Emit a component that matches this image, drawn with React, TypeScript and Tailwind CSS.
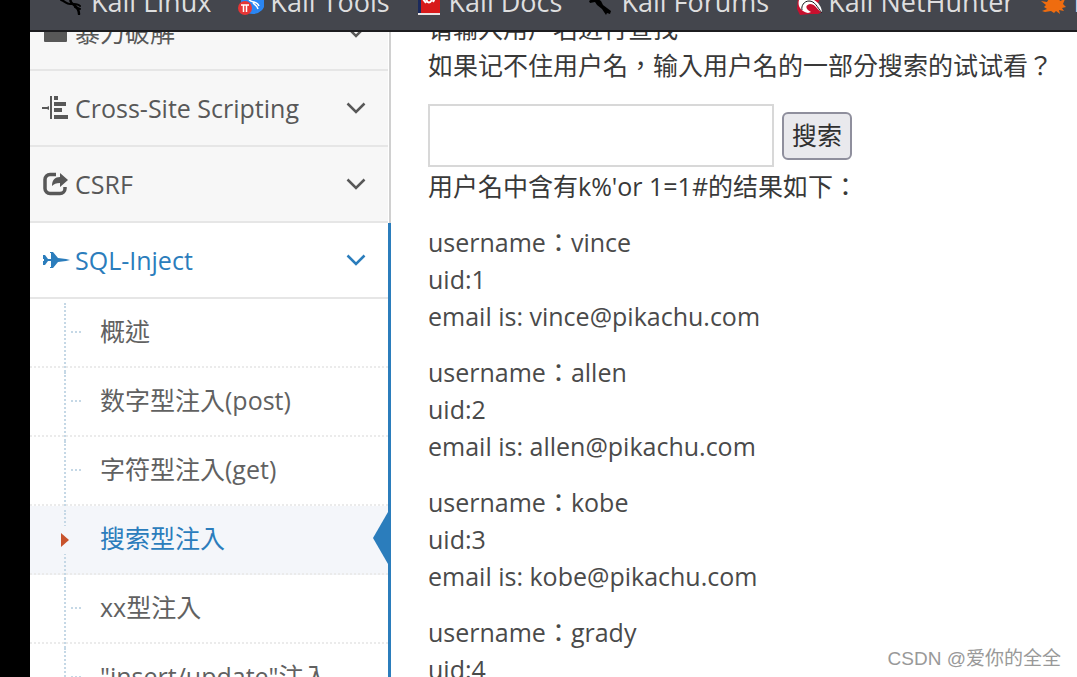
import { useState } from 'react';
import type { ReactNode } from 'react';

const bookmarks = [
  { label: 'Kali Linux', icon: <KaliDragon /> },
  { label: 'Kali Tools', icon: <KaliTools /> },
  { label: 'Kali Docs', icon: <KaliDocs /> },
  { label: 'Kali Forums', icon: <KaliForums /> },
  { label: 'Kali NetHunter', icon: <NetHunter /> },
  { label: 'Exploit-DB', icon: <ExploitDb /> },
];

const subItems = ['概述', '数字型注入(post)', '字符型注入(get)', '搜索型注入', 'xx型注入', '"insert/update"注入'];

const users = [
  { name: 'vince', uid: 1 },
  { name: 'allen', uid: 2 },
  { name: 'kobe', uid: 3 },
  { name: 'grady', uid: 4 },
];

function KaliDragon() {
  return (
    <svg viewBox="0 0 26 26" className="size-6.5" fill="none" stroke="#000" strokeLinecap="round">
      <path d="M2 11c4 1 5 4 9 4 4 0 8-1 10 2" strokeWidth="2" />
      <path d="M12 9c-3 7 8 6 8 16" strokeWidth="2.5" />
      <path d="M16 18l5 2" strokeWidth="2" />
    </svg>
  );
}

function KaliTools() {
  return (
    <svg viewBox="0 0 26 26" className="size-6.5">
      <circle cx="15" cy="13" r="12" fill="#2a86f3" />
      <path d="M11 11c4 3 8 1 10 6m-6-4c0 3 4 2 5 7" fill="none" stroke="#fff" strokeWidth="1.5" />
      <circle cx="7" cy="19" r="7" fill="#e63535" />
      <path d="M3 16h8M5.500 16v7M8.500 16v7" fill="none" stroke="#fff" strokeWidth="1.5" />
    </svg>
  );
}

function KaliDocs() {
  return (
    <svg viewBox="0 0 26 26" className="size-6.5">
      <path d="M1 0h22v26H1z" fill="#d81a1a" />
      <path d="M1 0h3v24H1z" fill="#1b2a5c" />
      <path d="M1 24h22v2H1z" fill="#e8e4e4" />
      <path d="M6 10l3 4m0-4c2 5 4 4 6 1m1 2 2-4" fill="none" stroke="#fff" strokeWidth="2" />
    </svg>
  );
}

function KaliForums() {
  return (
    <svg viewBox="0 0 26 26" className="size-6.5">
      <path d="M0 12l6-4 6 4 2 4 8 6-1 3-3-1-1 2-4-6-5-4-2-3-5 1z" fill="#000" />
    </svg>
  );
}

function NetHunter() {
  return (
    <svg viewBox="0 0 26 26" className="size-6.5">
      <path d="M2 8h23l-4 8 5 7-4 2h-8l-10 1-3-6z" fill="#c8102e" />
      <path d="M3 11c-2 7 3 12 9 13l3-1c-6-3-6-7-1-8 5 0 7 5 12 9 0-7-5-12-10-14z" fill="#fff" />
      <path d="M6 21c-1-4 2-9 7-9 6 0 8 6 13 12" fill="none" stroke="#16161a" strokeWidth="1" />
    </svg>
  );
}

function ExploitDb() {
  return (
    <svg viewBox="0 0 26 26" className="size-6.5">
      <path
        d="M0 12l6 1 3-5 8-1 2 5 5-2-2 5 3 3-4 1 2 3-5-1 1 4-4-3-2 2-3-2-6 1-3-1 5-2-3-2 2-2z"
        fill="#ef6c0f"
      />
    </svg>
  );
}

function ChevronDown() {
  return (
    <svg viewBox="0 0 20 12" className="h-3 w-5" fill="none" stroke="currentColor" strokeWidth="2.5">
      <path d="M1.500 1.500 10 10l8.500-8.500" />
    </svg>
  );
}

function FolderIcon() {
  return (
    <svg viewBox="0 0 28 24" className="h-6 w-7" fill="currentColor">
      <path d="M3 3h21a1 1 0 0 1 1 1v17a1 1 0 0 1-1 1H3a1 1 0 0 1-1-1V4a1 1 0 0 1 1-1z" />
    </svg>
  );
}

function BarsIcon() {
  return (
    <svg viewBox="0 0 28 24" className="h-6 w-7" fill="currentColor">
      <path d="M0 11h5l2-1v4l-2-1H0zM8 0h2v23H8zM12 0h4v4h-4zM12 6h12v4H12zM12 12h8v4h-8zM12 19h14v4H12z" />
    </svg>
  );
}

function ShareIcon() {
  return (
    <svg viewBox="0 0 28 24" className="h-6 w-7">
      <path
        d="M14 2.500H8a5 5 0 0 0-5 5v9a5 5 0 0 0 5 5h10a5 5 0 0 0 5-5V15"
        fill="none"
        stroke="currentColor"
        strokeWidth="3.5"
      />
      <path d="M18 1l8 7-8 7v-4c-4 0-6 1-8 3 0-6 3-9 8-9z" fill="currentColor" />
    </svg>
  );
}

function JetIcon() {
  return (
    <svg viewBox="0 0 28 24" className="h-6 w-7" fill="currentColor">
      <path d="M1 7h2l3 4h3V5H8V4h3l5 6 8 1 4 1-4 1-8 1-5 6H8v-1h1v-6H6l-3 4H1v-4h1v-2H1z" />
    </svg>
  );
}

interface MenuRowProps {
  icon: ReactNode;
  label: string;
  active?: boolean;
  onClick?: () => void;
}

function MenuRow({ icon, label, active, onClick }: MenuRowProps) {
  return (
    <button
      type="button"
      onClick={onClick}
      className={`flex h-[76px] w-full items-center gap-[5px] border-b-2 border-[#e6e6e6] pr-[22px] pl-3 text-left ${
        active ? 'bg-white text-[#2b7dbc]' : 'bg-[#f7f7f7] text-[#585858]'
      }`}
    >
      {icon}
      <span className="flex-1">{label}</span>
      <ChevronDown />
    </button>
  );
}

function Sidebar() {
  const [open, setOpen] = useState(true);
  const [current, setCurrent] = useState('搜索型注入');

  return (
    <nav className="-mt-[37px] flex w-[361px] shrink-0 flex-col">
      <div className="border-r-2 border-[#d0d0d0] pr-px">
        <MenuRow icon={<FolderIcon />} label="暴力破解" />
        <MenuRow icon={<BarsIcon />} label="Cross-Site Scripting" />
        <MenuRow icon={<ShareIcon />} label="CSRF" />
      </div>
      <div className="grow border-r-3 border-[#2b7dbc]">
        <MenuRow icon={<JetIcon />} label="SQL-Inject" active onClick={() => setOpen(!open)} />
        {open && (
          <ul className="relative">
            {subItems.map((item) => {
              const selected = item === current;
              return (
                <li
                  key={item}
                  className={`relative border-b-2 border-dotted border-[#ebebeb] ${selected ? 'bg-[#f4f6fa]' : ''}`}
                >
                  <a
                    href="#"
                    onClick={() => setCurrent(item)}
                    className={`flex h-[67px] items-center pb-1 pl-[70px] whitespace-nowrap ${
                      selected ? 'text-[#2b7dbc]' : 'text-[#616161]'
                    }`}
                  >
                    {item}
                  </a>
                  {selected ? (
                    <svg viewBox="0 0 15 52" className="absolute top-1.5 right-0 h-[52px] w-[15px]" fill="#2b7dbc">
                      <path d="M15 0v52L0 26z" />
                    </svg>
                  ) : (
                    <span className="absolute top-8 left-[41px] w-2.5 border-t-2 border-dotted border-[#c5d8e6]" />
                  )}
                  {/* tree line, broken by the caret on the current page */}
                  <span className="absolute top-1 -bottom-1.5 left-[34px] border-l-2 border-dotted border-[#c5d8e6]" />
                  {selected && (
                    <span className="absolute top-5 left-7 flex h-7 w-3 items-center bg-[#f4f6fa] pl-[3px]">
                      <svg viewBox="0 0 8 14" className="h-3.5 w-2" fill="#c8532c">
                        <path d="M0 0l8 7-8 7z" />
                      </svg>
                    </span>
                  )}
                </li>
              );
            })}
          </ul>
        )}
      </div>
    </nav>
  );
}

export default function App() {
  const [name, setName] = useState('');

  return (
    <div className="flex h-screen overflow-hidden bg-black pl-[30px] font-['Open_Sans','Noto_Sans_CJK_TC',sans-serif] text-[25px] leading-8">
      <div className="relative flex min-w-0 flex-1 flex-col bg-white">
        <header className="flex h-8 shrink-0 items-end gap-[27px] overflow-hidden border-b-2 border-[#1c1c1f] bg-[#44464d] pb-3 pl-[29px] text-[27px] text-[#dededf]">
          {bookmarks.map((b) => (
            <a key={b.label} href="#" className="flex shrink-0 items-center gap-1.5">
              {b.icon}
              <span className="whitespace-nowrap">{b.label}</span>
            </a>
          ))}
        </header>

        <div className="flex min-h-0 flex-1 overflow-hidden">
          <Sidebar />

          <main className="-mt-[22px] min-w-0 flex-1 pl-[37px] leading-[37px] text-[#393939]">
            <p>请输入用户名进行查找</p>
            <p className="whitespace-nowrap">如果记不住用户名，输入用户名的一部分搜索的试试看？</p>
            <form className="mt-5 mb-px flex items-center gap-2" onSubmit={(e) => e.preventDefault()}>
              <input
                type="text"
                aria-label="用户名"
                value={name}
                onChange={(e) => setName(e.target.value)}
                className="h-[63px] w-[346px] border-2 border-[#d8d8d8] px-2 outline-none"
              />
              <button
                type="submit"
                className="h-12 rounded-md border-2 border-[#8f8f9d] bg-[#e9e9ed] px-2 text-[#303030]"
              >
                搜索
              </button>
            </form>
            <p>用户名中含有k%'or 1=1#的结果如下：</p>
            {users.map((u) => (
              <p key={u.uid} className="mt-[19px] whitespace-nowrap text-[#4a4a4a]">
                username：{u.name}
                <br />
                uid:{u.uid}
                <br />
                email is: {u.name}@pikachu.com
              </p>
            ))}
          </main>
        </div>

        <span className="absolute right-4 bottom-0.5 font-['Liberation_Sans','Noto_Sans_CJK_SC',sans-serif] text-[19px] text-[#999]">
          CSDN @爱你的全全
        </span>
      </div>
    </div>
  );
}
